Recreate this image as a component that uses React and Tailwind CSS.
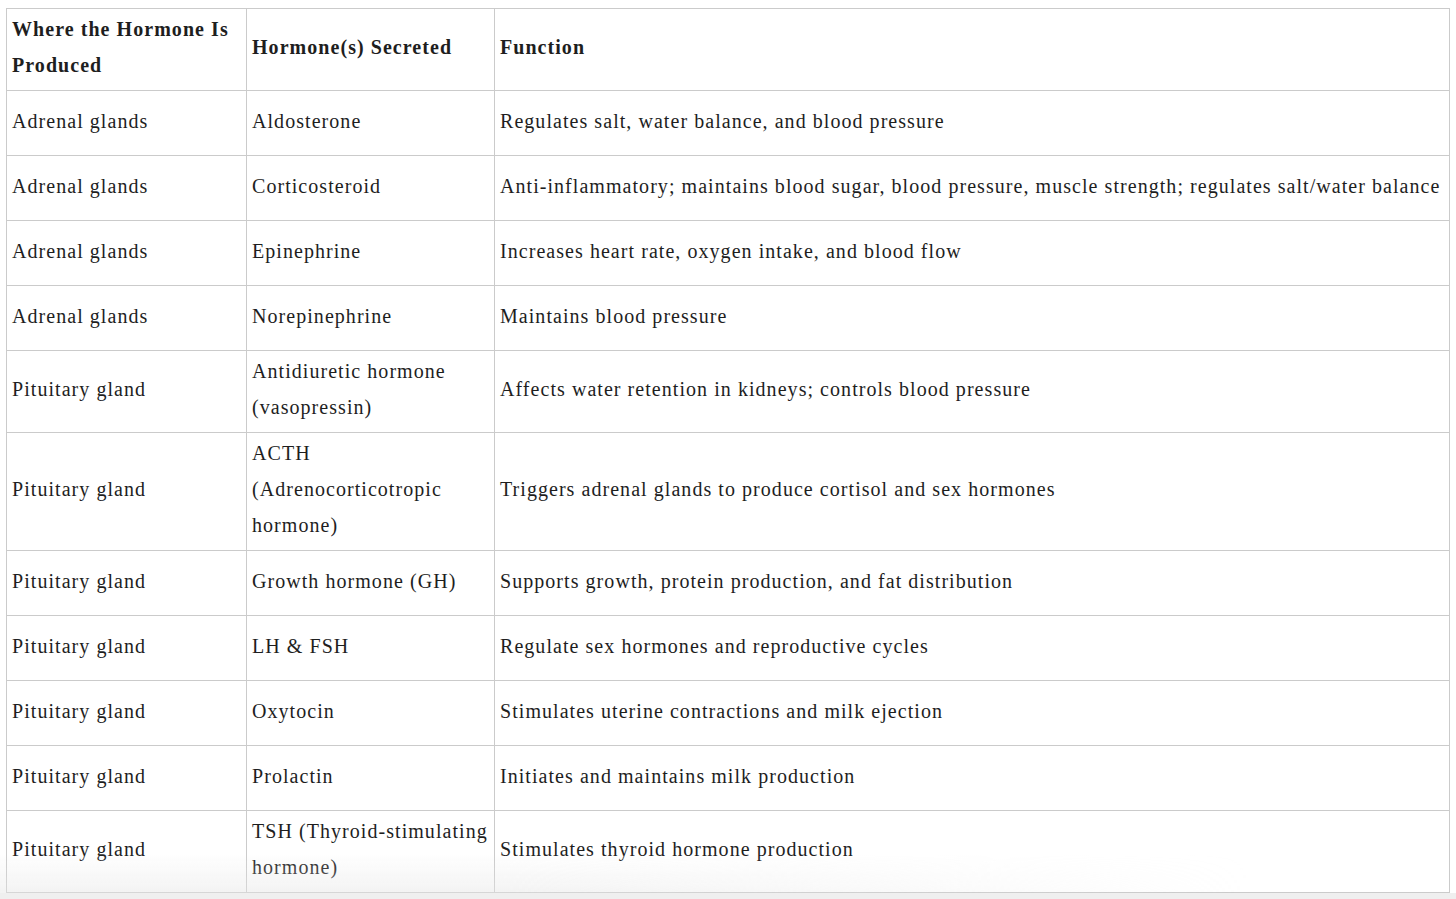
import React from 'react';

const rows = [
  { place: 'Adrenal glands', hormone: ['Aldosterone'], fn: 'Regulates salt, water balance, and blood pressure' },
  { place: 'Adrenal glands', hormone: ['Corticosteroid'], fn: 'Anti-inflammatory; maintains blood sugar, blood pressure, muscle strength; regulates salt/water balance' },
  { place: 'Adrenal glands', hormone: ['Epinephrine'], fn: 'Increases heart rate, oxygen intake, and blood flow' },
  { place: 'Adrenal glands', hormone: ['Norepinephrine'], fn: 'Maintains blood pressure' },
  { place: 'Pituitary gland', hormone: ['Antidiuretic hormone', '(vasopressin)'], fn: 'Affects water retention in kidneys; controls blood pressure' },
  { place: 'Pituitary gland', hormone: ['ACTH', '(Adrenocorticotropic', 'hormone)'], fn: 'Triggers adrenal glands to produce cortisol and sex hormones' },
  { place: 'Pituitary gland', hormone: ['Growth hormone (GH)'], fn: 'Supports growth, protein production, and fat distribution' },
  { place: 'Pituitary gland', hormone: ['LH & FSH'], fn: 'Regulate sex hormones and reproductive cycles' },
  { place: 'Pituitary gland', hormone: ['Oxytocin'], fn: 'Stimulates uterine contractions and milk ejection' },
  { place: 'Pituitary gland', hormone: ['Prolactin'], fn: 'Initiates and maintains milk production' },
  { place: 'Pituitary gland', hormone: ['TSH (Thyroid-stimulating', 'hormone)'], fn: 'Stimulates thyroid hormone production' },
];

const cell = 'border border-[#cbcbcb] px-[5px] pt-[2px] pb-[7px] align-middle';

export default function App() {
  return (
    <div className="min-h-[899px] w-full bg-[#efefef] font-['Liberation_Serif',serif] text-[20px] leading-[36px] tracking-[1.05px] text-[#1e1e1e]">
      <div className="relative bg-white pl-[6px] pr-[6px] pt-[8px]">
        <table className="w-[1444px] border-collapse table-fixed">
          <colgroup>
            <col className="w-[240px]" />
            <col className="w-[248px]" />
            <col />
          </colgroup>
          <thead>
            <tr>
              <th className={`${cell} h-[82px] text-left font-bold`}>Where the Hormone Is<br />Produced</th>
              <th className={`${cell} text-left font-bold`}>Hormone(s) Secreted</th>
              <th className={`${cell} text-left font-bold`}>Function</th>
            </tr>
          </thead>
          <tbody>
            {rows.map((r, i) => (
              <tr key={i} className={i === rows.length - 1 ? 'h-[81px]' : ''}>
                <td className={`${cell} h-[65px]`}>{r.place}</td>
                <td className={cell}>
                  {r.hormone.map((h, j) => (
                    <div key={j} className="whitespace-nowrap">{h}</div>
                  ))}
                </td>
                <td className={`${cell} whitespace-nowrap`}>{r.fn}</td>
              </tr>
            ))}
          </tbody>
        </table>
        {/* soft fade over the bottom edge */}
        <div className="pointer-events-none absolute bottom-0 left-0 h-[40px] w-[1250px] bg-gradient-to-t from-[#e4e4e4]/45 to-transparent [mask-image:linear-gradient(to_right,black_40%,transparent)]" />
      </div>
    </div>
  );
}
